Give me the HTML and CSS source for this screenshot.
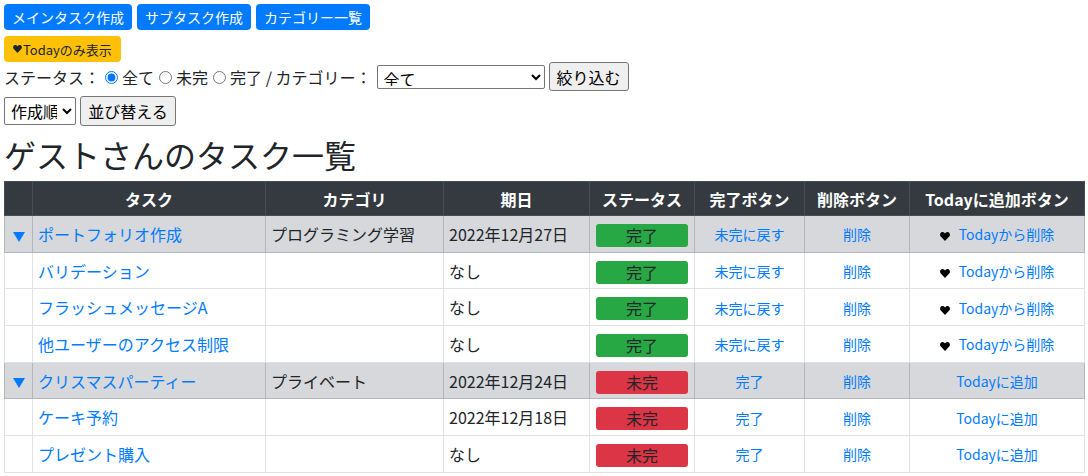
FILE: index.html
```html
<!DOCTYPE html>
<html lang="ja">
<head>
<meta charset="utf-8">
<title>タスク一覧</title>
<link rel="stylesheet" href="styles.css">
</head>
<body>
<div class="page">
  <div class="topbar">
    <a class="btn btn-primary" href="#">メインタスク作成</a>
    <a class="btn btn-primary" href="#">サブタスク作成</a>
    <a class="btn btn-primary" href="#">カテゴリー一覧</a>
  </div>
  <div class="todaybar">
    <a class="btn btn-warning" href="#"><svg class="heart" viewBox="0 0 10 9" width="9" height="8"><path d="M5 9 L0.8 4.6 C-0.6 3 0 0.4 2.3 0.1 C3.6 0 4.5 0.8 5 1.6 C5.5 0.8 6.4 0 7.7 0.1 C10 0.4 10.6 3 9.2 4.6 Z"/></svg>Todayのみ表示</a>
  </div>
  <form class="filter">
    <span>ステータス：</span>
    <input type="radio" name="status" checked><span>全て</span>
    <input type="radio" name="status"><span>未完</span>
    <input type="radio" name="status"><span>完了 / カテゴリー：</span>
    <select class="sel-cat"><option>全て</option></select>
    <button type="button" class="plain-btn btn-filter">絞り込む</button>
  </form>
  <form class="sort">
    <select class="sel-sort"><option>作成順</option></select>
    <button type="button" class="plain-btn btn-sort">並び替える</button>
  </form>
  <h1 class="title">ゲストさんのタスク一覧</h1>
  <table class="tasks">
    <colgroup>
      <col style="width:28px"><col style="width:233px"><col style="width:178px"><col style="width:146px"><col style="width:105px"><col style="width:110px"><col style="width:105px"><col style="width:175px">
    </colgroup>
    <thead>
      <tr><th></th><th>タスク</th><th>カテゴリ</th><th>期日</th><th>ステータス</th><th>完了ボタン</th><th>削除ボタン</th><th>Todayに追加ボタン</th></tr>
    </thead>
    <tbody>
      <tr class="main">
        <td class="tog"><svg viewBox="0 0 12 10" width="12" height="10"><polygon points="0,0 12,0 6,10"/></svg></td>
        <td><a href="#">ポートフォリオ作成</a></td><td>プログラミング学習</td><td>2022年12月27日</td>
        <td class="st"><span class="badge done">完了</span></td>
        <td class="act"><a href="#">未完に戻す</a></td><td class="act"><a href="#">削除</a></td>
        <td class="act"><svg class="heart" viewBox="0 0 10 9" width="10" height="9"><path d="M5 9 L0.8 4.6 C-0.6 3 0 0.4 2.3 0.1 C3.6 0 4.5 0.8 5 1.6 C5.5 0.8 6.4 0 7.7 0.1 C10 0.4 10.6 3 9.2 4.6 Z"/></svg><a href="#">Todayから削除</a></td>
      </tr>
      <tr>
        <td></td><td><a href="#">バリデーション</a></td><td></td><td>なし</td>
        <td class="st"><span class="badge done">完了</span></td>
        <td class="act"><a href="#">未完に戻す</a></td><td class="act"><a href="#">削除</a></td>
        <td class="act"><svg class="heart" viewBox="0 0 10 9" width="10" height="9"><path d="M5 9 L0.8 4.6 C-0.6 3 0 0.4 2.3 0.1 C3.6 0 4.5 0.8 5 1.6 C5.5 0.8 6.4 0 7.7 0.1 C10 0.4 10.6 3 9.2 4.6 Z"/></svg><a href="#">Todayから削除</a></td>
      </tr>
      <tr>
        <td></td><td><a href="#">フラッシュメッセージA</a></td><td></td><td>なし</td>
        <td class="st"><span class="badge done">完了</span></td>
        <td class="act"><a href="#">未完に戻す</a></td><td class="act"><a href="#">削除</a></td>
        <td class="act"><svg class="heart" viewBox="0 0 10 9" width="10" height="9"><path d="M5 9 L0.8 4.6 C-0.6 3 0 0.4 2.3 0.1 C3.6 0 4.5 0.8 5 1.6 C5.5 0.8 6.4 0 7.7 0.1 C10 0.4 10.6 3 9.2 4.6 Z"/></svg><a href="#">Todayから削除</a></td>
      </tr>
      <tr>
        <td></td><td><a href="#">他ユーザーのアクセス制限</a></td><td></td><td>なし</td>
        <td class="st"><span class="badge done">完了</span></td>
        <td class="act"><a href="#">未完に戻す</a></td><td class="act"><a href="#">削除</a></td>
        <td class="act"><svg class="heart" viewBox="0 0 10 9" width="10" height="9"><path d="M5 9 L0.8 4.6 C-0.6 3 0 0.4 2.3 0.1 C3.6 0 4.5 0.8 5 1.6 C5.5 0.8 6.4 0 7.7 0.1 C10 0.4 10.6 3 9.2 4.6 Z"/></svg><a href="#">Todayから削除</a></td>
      </tr>
      <tr class="main">
        <td class="tog"><svg viewBox="0 0 12 10" width="12" height="10"><polygon points="0,0 12,0 6,10"/></svg></td>
        <td><a href="#">クリスマスパーティー</a></td><td>プライベート</td><td>2022年12月24日</td>
        <td class="st"><span class="badge todo">未完</span></td>
        <td class="act"><a href="#">完了</a></td><td class="act"><a href="#">削除</a></td>
        <td class="act"><a href="#">Todayに追加</a></td>
      </tr>
      <tr>
        <td></td><td><a href="#">ケーキ予約</a></td><td></td><td>2022年12月18日</td>
        <td class="st"><span class="badge todo">未完</span></td>
        <td class="act"><a href="#">完了</a></td><td class="act"><a href="#">削除</a></td>
        <td class="act"><a href="#">Todayに追加</a></td>
      </tr>
      <tr>
        <td></td><td><a href="#">プレゼント購入</a></td><td></td><td>なし</td>
        <td class="st"><span class="badge todo">未完</span></td>
        <td class="act"><a href="#">完了</a></td><td class="act"><a href="#">削除</a></td>
        <td class="act"><a href="#">Todayに追加</a></td>
      </tr>
    </tbody>
  </table>
</div>
</body>
</html>
```
FILE: styles.css
```css
* { box-sizing: border-box; }
html, body { margin: 0; padding: 0; background: #fff; }
body {
  font-family: "Noto Sans CJK JP", "Noto Sans", sans-serif;
  font-size: 16px;
  line-height: 1.5;
  color: #212529;
}
a { color: #007bff; text-decoration: none; }
.page { padding: 4px; }

.topbar { display: flex; gap: 5px; }
.btn {
  display: inline-flex;
  align-items: center;
  height: 26px;
  padding: 0 8px;
  border-radius: 4px;
  font-size: 14px;
  line-height: 1;
  white-space: nowrap;
}
.btn-primary { background: #007bff; color: #fff; }
.btn-warning { background: #ffc107; color: #212529; font-size: 13px; padding: 0 8px 0 9px; width: 117px; }
.btn-warning .heart { margin-right: 1px; fill: #212529; }

.todaybar { margin-top: 6px; display: flex; }

.filter, .sort { margin: 0; display: flex; align-items: center; }
.filter { height: 29px; }
.sort { height: 30px; margin-top: 5px; }
.filter input[type=radio] { margin: 1px 4px 0 5px; width: 13px; height: 13px; }

select {
  font-family: inherit;
  font-size: 16px;
  line-height: 20px;
  color: #000;
  background: #fff;
  border: 1px solid #767676;
  border-radius: 2px;
  padding: 0 2px 2px;
  margin: 0;
}
.sel-cat { width: 168px; height: 24px; margin-left: 5px; }
.sel-sort { width: 72px; height: 28px; }
.plain-btn {
  font-family: inherit;
  font-size: 16px;
  line-height: 1;
  color: #000;
  background: #efefef;
  border: 1px solid #767676;
  border-radius: 3px;
  padding: 0 7px;
  margin: 0 0 0 4px;
}
.btn-filter { width: 80px; height: 29px; }
.btn-sort { width: 96px; height: 30px; }

.title {
  font-size: 32px;
  font-weight: 400;
  line-height: 38px;
  margin: 9px 0 8px;
}

.tasks {
  border-collapse: collapse;
  table-layout: fixed;
  width: 1080px;
}
.tasks th, .tasks td {
  border: 1px solid #dee2e6;
  padding: 0 5px;
  vertical-align: middle;
  white-space: nowrap;
  overflow: hidden;
}
.tasks th {
  background: #343a40;
  color: #fff;
  border-color: #454d55;
  font-weight: 700;
  text-align: center;
  height: 34px;
  font-size: 16px;
}
.tasks td { height: 36.7px; }
.tasks tr.main td { background: #d6d8db; border-color: #b3b7bb; }
.tasks td.tog { text-align: center; padding: 0; }
.tasks td.tog svg { fill: #007bff; display: inline-block; vertical-align: middle; }
.tasks td.st { text-align: center; padding: 0 6px; }
.badge {
  display: inline-block;
  width: 92px;
  height: 23px;
  line-height: 23px;
  border-radius: 3px;
  text-align: center;
  color: #212529;
  vertical-align: middle;
}
.badge.done { background: #28a745; }
.badge.todo { background: #dc3545; }
.tasks td.act { text-align: center; font-size: 14px; padding-top: 2px; }
.tasks td.act .heart { fill: #000; vertical-align: -1px; margin-right: 9px; }
```
